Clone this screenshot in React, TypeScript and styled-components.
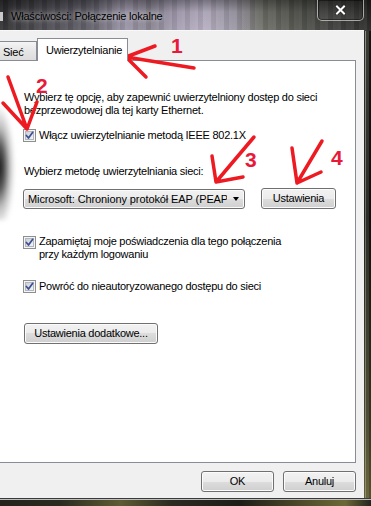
import React from "react";
import styled, { createGlobalStyle } from "styled-components";

const Global = createGlobalStyle`
  html, body { margin: 0; padding: 0; }
  body { width: 371px; height: 506px; overflow: hidden; background: #1e1e1e; }
  #root { width: 371px; height: 506px; }
`;

const FONT = `"Liberation Sans", Arial, sans-serif`;

const Window = styled.div`
  position: relative;
  width: 371px;
  height: 506px;
  overflow: hidden;
  display: flex;
  flex-direction: column;
  font-family: ${FONT};
  font-size: 11px;
  letter-spacing: -0.25px;
  color: #000;
  background:
    repeating-linear-gradient(90deg, rgba(255,255,255,0.05) 0 3px, rgba(0,0,0,0.07) 3px 8px, rgba(255,255,255,0.03) 8px 13px),
    linear-gradient(to right, #2c2c2e 0, #45444a 40px, #5d5b65 90px, #9a94a7 125px, #86818f 150px, #a39cb0 175px, #b5aec1 205px, #9a95a2 235px, #6c6d66 262px, #53554e 292px, #3d3e3b 330px, #262624 371px);
`;

const TitleBar = styled.div`
  height: 31px;
  flex: none;
  display: flex;
  align-items: flex-start;
  background: linear-gradient(to bottom, rgba(0,0,0,0.35) 0, rgba(0,0,0,0.05) 12px, rgba(255,255,255,0.06) 31px);
`;

const IconStub = styled.div`
  width: 3px;
  height: 9px;
  margin-top: 12px;
  background: #c9c9c9;
  flex: none;
`;

const Title = styled.div`
  margin: 9px 0 0 8px;
  font-size: 11px;
  line-height: 14px;
  letter-spacing: -0.2px;
  color: #000;
  white-space: nowrap;
  text-shadow: 0 0 4px rgba(255,255,255,0.55), 0 0 9px rgba(255,255,255,0.45);
`;

const CloseButton = styled.div`
  margin-left: auto;
  margin-right: 7px;
  width: 47px;
  height: 21px;
  box-sizing: border-box;
  border: 1px solid rgba(220,220,220,0.7);
  border-top: none;
  border-radius: 0 0 5px 5px;
  box-shadow: inset 0 0 0 1px rgba(0,0,0,0.4);
  background: linear-gradient(to bottom, rgba(40,40,40,0.3), rgba(110,110,110,0.2));
  display: flex;
  align-items: center;
  justify-content: center;
`;

const CloseIcon = () => (
  <svg width="11" height="10" viewBox="0 0 11 10">
    <path d="M2 1.5 L9 8.5 M9 1.5 L2 8.5" stroke="#2a2a2a" strokeWidth="3.6" strokeLinecap="square" />
    <path d="M2 1.5 L9 8.5 M9 1.5 L2 8.5" stroke="#ffffff" strokeWidth="2" strokeLinecap="square" />
  </svg>
);

const Body = styled.div`
  flex: 1;
  display: flex;
  min-height: 0;
`;

const Client = styled.div`
  flex: 1;
  margin-left: -10px;
  padding: 7px 8px 6px 6px;
  background: #f0f0f0;
  border-top: 1px solid #f8f8f8;
  margin-top: -1px;
  display: flex;
  flex-direction: column;
  min-width: 0;
`;

const RightFrame = styled.div`
  width: 7px;
  flex: none;
  background:
    linear-gradient(to bottom, rgba(0,0,0,0) 0, rgba(0,0,0,0.25) 40%, rgba(120,118,60,0.35) 85%, rgba(150,145,70,0.5) 100%),
    linear-gradient(to right, #2e2e2e 0 1px, #8d8e86 1px 2px, #3a3b34 2px 5px, #141411 5px);
`;

const BottomFrame = styled.div`
  height: 8px;
  flex: none;
  background:
    linear-gradient(to bottom, #3a3a3a 0 1px, #bdbdbd 1px 2px, rgba(0,0,0,0) 2px),
    linear-gradient(to right, #23231c 0, #2a2a20 60px, #5e5c34 120px, #2b2b22 170px, #1d1d18 240px, #4c4a2a 300px, #6b6838 345px, #24241d 371px);
`;

const TabStrip = styled.div`
  display: flex;
  align-items: flex-end;
  height: 23px;
  position: relative;
  z-index: 1;
  flex: none;
`;

const Tab = styled.div<{ $active?: boolean; $w: number; $pl: number }>`
  box-sizing: border-box;
  width: ${(p) => p.$w}px;
  padding-left: ${(p) => p.$pl}px;
  height: ${(p) => (p.$active ? 23 : 19)}px;
  margin-bottom: ${(p) => (p.$active ? 0 : 1)}px;
  padding-top: ${(p) => (p.$active ? 4 : 3)}px;
  line-height: 14px;
  border: 1px solid #898c95;
  border-bottom: none;
  background: ${(p) => (p.$active ? "#ffffff" : "linear-gradient(to bottom, #f4f4f4, #e6e6e6 50%, #dcdcdc)")};
  white-space: nowrap;
  flex: none;
`;

const Panel = styled.div`
  flex: 1;
  margin-top: -1px;
  border: 1px solid #898c95;
  background: #fff;
  padding: 30px 0 0 27px;
  display: flex;
  flex-direction: column;
  align-items: flex-start;
  line-height: 13px;
  min-height: 0;
`;

const Text = styled.div<{ $mt?: number }>`
  margin-top: ${(p) => p.$mt ?? 0}px;
  white-space: nowrap;
`;

const CheckRow = styled.div<{ $mt: number }>`
  margin-top: ${(p) => p.$mt}px;
  margin-left: -1px;
  display: flex;
  align-items: flex-start;
  gap: 3px;
  white-space: nowrap;
`;

const BoxWrap = styled.span<{ $mt?: number }>`
  display: block;
  flex: none;
  width: 13px;
  height: 13px;
  margin-top: ${(p) => p.$mt ?? 0}px;
`;

const Checkbox = ({ mt }: { mt?: number }) => (
  <BoxWrap $mt={mt}>
    <svg width="13" height="13" viewBox="0 0 13 13">
      <defs>
        <linearGradient id="cbg" x1="0" y1="0" x2="1" y2="1">
          <stop offset="0" stopColor="#c9cdd4" />
          <stop offset="1" stopColor="#f6f6f6" />
        </linearGradient>
      </defs>
      <rect x="0.5" y="0.5" width="12" height="12" fill="#f5f5f5" stroke="#8e8f8f" />
      <rect x="2.5" y="2.5" width="8" height="8" fill="url(#cbg)" stroke="#b3b7bd" />
      <path d="M3.4 6.5 L5.5 9 L9.7 3.3" fill="none" stroke="#3b4f93" strokeWidth="1.7" strokeLinecap="round" strokeLinejoin="round" />
    </svg>
  </BoxWrap>
);

const MethodRow = styled.div`
  margin-top: 10px;
  display: flex;
  align-items: flex-start;
`;

const Button = styled.div<{ $w: number; $mt?: number; $h?: number }>`
  box-sizing: border-box;
  width: ${(p) => p.$w}px;
  height: ${(p) => p.$h ?? 21}px;
  margin-top: ${(p) => p.$mt ?? 0}px;
  border: 1px solid #707070;
  border-radius: 3px;
  background: linear-gradient(to bottom, #f2f2f2 0%, #ebebeb 50%, #dddddd 50%, #cfcfcf 100%);
  box-shadow: inset 0 0 0 1px #fbfbfb;
  display: flex;
  align-items: center;
  justify-content: center;
  line-height: 13px;
  white-space: nowrap;
  flex: none;
`;

const Combo = styled.div`
  box-sizing: border-box;
  width: 222px;
  height: 20px;
  margin: 1px 16px 0 -1px;
  border: 1px solid #707070;
  border-radius: 3px;
  background: linear-gradient(to bottom, #f2f2f2 0%, #ebebeb 50%, #dddddd 50%, #cfcfcf 100%);
  box-shadow: inset 0 0 0 1px #fbfbfb;
  display: flex;
  align-items: center;
  padding: 0 5px 0 4px;
  flex: none;
`;

const ComboText = styled.span`
  width: 199px;
  flex: none;
  overflow: hidden;
  white-space: nowrap;
  letter-spacing: -0.1px;
`;

const ComboArrow = styled.span`
  flex: none;
  margin-left: 6px;
  width: 0;
  height: 0;
  border-left: 3.5px solid transparent;
  border-right: 3.5px solid transparent;
  border-top: 4px solid #000;
`;

const Footer = styled.div`
  margin-top: 8px;
  display: flex;
  justify-content: flex-end;
  gap: 9px;
  flex: none;
`;

const LeftShade = styled.div`
  position: absolute;
  left: -14px;
  top: 95px;
  width: 32px;
  height: 125px;
  background: radial-gradient(ellipse 50% 50% at 40% 58%, rgba(10,10,10,0.97) 0%, rgba(40,40,40,0.8) 35%, rgba(110,110,110,0.45) 65%, rgba(220,220,220,0) 100%);
  filter: blur(2px);
  pointer-events: none;
`;

const Overlay = styled.svg`
  position: absolute;
  left: 0;
  top: 0;
  pointer-events: none;
`;

const Num = styled.text`
  font-family: ${FONT};
  font-weight: bold;
  font-size: 21px;
  fill: #e8193a;
`;

const Annotations = () => (
  <Overlay width="371" height="506" viewBox="0 0 371 506">
    <g stroke="#ee1a22" strokeWidth="3.5" strokeLinecap="round" fill="none">
      <path d="M194 68 L126 57 M126 57 L155 46 M126 57 L146 77" />
      <path d="M8 77 L27 129 M3 103 L27 129 M37 102 L27 129" />
      <path d="M254 137 L216 182 M212 156 L216 182 M243 177 L216 182" />
      <path d="M322 141 L297 183 M292 148 L297 183 M321 172 L297 183" />
    </g>
    <Num x="171" y="53">1</Num>
    <Num x="36" y="93">2</Num>
    <Num x="245" y="167">3</Num>
    <Num x="331" y="165">4</Num>
  </Overlay>
);

export default function App() {
  return (
    <>
      <Global />
      <Window>
        <TitleBar>
          <IconStub />
          <Title>Właściwości: Połączenie lokalne</Title>
          <CloseButton>
            <CloseIcon />
          </CloseButton>
        </TitleBar>
        <Body>
          <Client>
            <TabStrip>
              <Tab $w={41} $pl={6}>Sieć</Tab>
              <Tab $active $w={91} $pl={8}>Uwierzytelnianie</Tab>
            </TabStrip>
            <Panel>
              <Text>
                Wybierz tę opcję, aby zapewnić uwierzytelniony dostęp do sieci
                <br />
                bezprzewodowej dla tej karty Ethernet.
              </Text>
              <CheckRow $mt={12}>
                <Checkbox />
                <span>Włącz uwierzytelnianie metodą IEEE 802.1X</span>
              </CheckRow>
              <Text $mt={23}>Wybierz metodę uwierzytelniania sieci:</Text>
              <MethodRow>
                <Combo>
                  <ComboText>Microsoft: Chroniony protokół EAP (PEAP)</ComboText>
                  <ComboArrow />
                </Combo>
                <Button $w={75}>Ustawienia</Button>
              </MethodRow>
              <CheckRow $mt={26}>
                <Checkbox mt={1} />
                <span>
                  Zapamiętaj moje poświadczenia dla tego połączenia
                  <br />
                  przy każdym logowaniu
                </span>
              </CheckRow>
              <CheckRow $mt={19}>
                <Checkbox />
                <span>Powróć do nieautoryzowanego dostępu do sieci</span>
              </CheckRow>
              <Button $w={134} $mt={30}>Ustawienia dodatkowe...</Button>
            </Panel>
            <Footer>
              <Button $w={73}>OK</Button>
              <Button $w={73}>Anuluj</Button>
            </Footer>
          </Client>
          <RightFrame />
        </Body>
        <BottomFrame />
        <LeftShade />
        <Annotations />
      </Window>
    </>
  );
}
